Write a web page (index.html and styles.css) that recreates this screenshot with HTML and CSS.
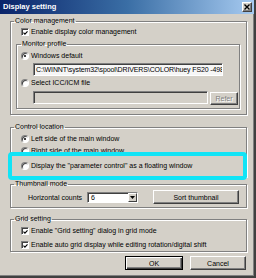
FILE: index.html
```html
<!DOCTYPE html>
<html>
<head>
<meta charset="utf-8">
<link rel="stylesheet" href="styles.css">
</head>
<body>
<div class="win">
  <div class="titlebar">
    <span class="title">Display setting</span>
    <span class="close"><svg width="6" height="6" viewBox="0 0 6 6"><path d="M0.5 0.5L5.5 5.5M5.5 0.5L0.5 5.5" stroke="#000" stroke-width="1.4"/></svg></span>
  </div>
  <div class="body">
    <fieldset class="grp g-color">
      <legend>Color management</legend>
      <div class="opt row-cm"><span class="chk"><svg width="6" height="6" viewBox="0 0 6 6"><path d="M0.6 2.6L2.3 4.4L5.4 1.0" stroke="#000" stroke-width="1.3" fill="none"/></svg></span>Enable display color management</div>
      <fieldset class="grp sub">
        <legend>Monitor profile</legend>
        <div class="opt r-win"><span class="rad on"></span>Windows default</div>
        <div class="field f1">C:\WINNT\system32\spool\DRIVERS\COLOR\huey FS20 -498</div>
        <div class="opt r-icc"><span class="rad"></span>Select ICC/ICM file</div>
        <div class="filerow"><div class="field f2"></div><div class="btn dis">Refer</div></div>
      </fieldset>
    </fieldset>

    <fieldset class="grp g-ctrl">
      <legend>Control location</legend>
      <div class="opt r-left"><span class="rad on"></span>Left side of the main window</div>
      <div class="opt r-right"><span class="rad"></span>Right side of the main window</div>
      <div class="opt r-float"><span class="rad"></span>Display the "parameter control" as a floating window</div>
    </fieldset>

    <fieldset class="grp g-thumb">
      <legend>Thumbnail mode</legend>
      <div class="thumbrow">
        <span class="hlabel">Horizontal counts</span>
        <div class="select"><span class="sval">6</span><span class="sarrow"><svg width="5" height="3" viewBox="0 0 5 3"><path d="M0 0H5L2.5 3Z" fill="#000"/></svg></span></div>
        <div class="btn sort">Sort thumbnail</div>
      </div>
    </fieldset>

    <fieldset class="grp g-grid">
      <legend>Grid setting</legend>
      <div class="opt r-g1"><span class="chk"><svg width="6" height="6" viewBox="0 0 6 6"><path d="M0.6 2.6L2.3 4.4L5.4 1.0" stroke="#000" stroke-width="1.3" fill="none"/></svg></span>Enable "Grid setting" dialog in grid mode</div>
      <div class="opt r-g2"><span class="chk"><svg width="6" height="6" viewBox="0 0 6 6"><path d="M0.6 2.6L2.3 4.4L5.4 1.0" stroke="#000" stroke-width="1.3" fill="none"/></svg></span>Enable auto grid display while editing rotation/digital shift</div>
    </fieldset>

    <div class="actions">
      <div class="btn ok">OK</div>
      <div class="btn cancel">Cancel</div>
    </div>
  </div>
  <div class="highlight"></div>
</div>
</body>
</html>
```

FILE: styles.css
```css
* { box-sizing: border-box; }
html, body { margin: 0; padding: 0; background: #d4d0c8; }
.win {
  position: relative;
  width: 256px;
  height: 278px;
  background: #d4d0c8;
  border-right: 2px solid #404040;
  border-bottom: 2px solid #404040;
  box-shadow: inset -1px -1px 0 #808080;
  font-family: "Liberation Sans", Arial, sans-serif;
  font-size: 7px;
  color: #000;
  overflow: hidden;
}
.titlebar {
  height: 14px;
  width: 254px;
  background: linear-gradient(to right, #0a246a 0%, #3a6ea5 50%, #a6caf0 100%);
  display: flex;
  align-items: center;
  justify-content: space-between;
  padding: 0 2px 0 3px;
}
.title {
  color: #fff;
  font-weight: bold;
  font-size: 7.5px;
  line-height: 14px;
}
.close {
  width: 10px;
  height: 10px;
  background: #d4d0c8;
  border: 1px solid;
  border-color: #fff #404040 #404040 #fff;
  box-shadow: inset -1px -1px 0 #808080;
  display: flex;
  align-items: center;
  justify-content: center;
}
.body { display: flex; flex-direction: column; }

.grp {
  margin: 0 0 0 10px;
  width: 237px;
  min-width: 0;
  padding: 0;
  border: 1px solid #808080;
  box-shadow: inset 1px 1px 0 #fff, 1px 1px 0 #fff;
}
.grp legend {
  margin-left: 3px;
  padding: 0 1px;
  line-height: 10px;
  height: 10px;
}
.sub legend { margin-left: 4px; }

.opt {
  display: flex;
  align-items: center;
  height: 10px;
  line-height: 10px;
  white-space: nowrap;
}
.chk {
  width: 8px;
  height: 8px;
  margin-right: 2px;
  background: #fff;
  border: 1px solid;
  border-color: #808080 #fff #fff #808080;
  box-shadow: inset 1px 1px 0 #404040;
  display: flex;
  align-items: center;
  justify-content: center;
  flex: none;
}
.chk svg { display: block; margin: 1px 0 0 1px; }
.rad {
  width: 8px;
  height: 8px;
  margin-right: 2px;
  border-radius: 50%;
  background: #fff;
  border: 1px solid;
  border-color: #808080 #fff #fff #808080;
  box-shadow: inset 1px 1px 0 #404040;
  flex: none;
  position: relative;
}
.rad.on::after {
  content: "";
  position: absolute;
  left: 2px;
  top: 2px;
  width: 2px;
  height: 2px;
  border-radius: 50%;
  background: #000;
}

/* Color management */
.g-color { margin-top: 2px; padding-bottom: 5px; }
.row-cm { margin: 1px 0 0 10px; }
.sub { margin: 2px 0 0 5px; width: 224px; padding-bottom: 3px; }
.r-win { margin: 2px 0 0 4px; }
.field {
  height: 13px;
  border: 1px solid;
  border-color: #808080 #fff #fff #808080;
  box-shadow: inset 1px 1px 0 #404040;
  white-space: nowrap;
  overflow: hidden;
  line-height: 11px;
  padding-left: 2px;
}
.f1 { margin: 2px 0 0 16px; width: 190px; background: #f6f6f6; letter-spacing: -0.12px; }
.r-icc { margin: 2px 0 0 4px; }
.filerow { display: flex; align-items: flex-start; margin: 3px 0 0 16px; height: 14px; }
.f2 { width: 175px; background: #d4d0c8; }
.btn {
  background: #d4d0c8;
  border: 1px solid;
  border-color: #fff #404040 #404040 #fff;
  box-shadow: inset -1px -1px 0 #808080;
  display: flex;
  align-items: center;
  justify-content: center;
  white-space: nowrap;
}
.btn.dis {
  width: 28px;
  height: 13px;
  margin: 1px 0 0 2px;
  color: #808080;
  text-shadow: 1px 1px 0 #fff;
}

/* Control location */
.g-ctrl { margin-top: 7px; padding-bottom: 5px; }
.r-left { margin: 2px 0 0 10px; }
.r-right { margin: 2px 0 0 10px; }
.r-float { margin: 5px 0 0 10px; }

/* Thumbnail */
.g-thumb { margin-top: 2px; padding-bottom: 3px; }
.thumbrow { display: flex; align-items: flex-end; margin: 1px 0 0 17px; height: 14px; }
.hlabel { align-self: center; width: 59px; }
.select {
  width: 51px;
  height: 11px;
  margin-bottom: 1px;
  background: #fff;
  border: 1px solid;
  border-color: #808080 #fff #fff #808080;
  box-shadow: inset 1px 1px 0 #404040;
  display: flex;
  align-items: stretch;
}
.sval { flex: 1; padding-left: 3px; line-height: 9px; }
.sarrow {
  width: 9px;
  background: #d4d0c8;
  border: 1px solid;
  border-color: #fff #404040 #404040 #fff;
  display: flex;
  align-items: center;
  justify-content: center;
}
.btn.sort { width: 86px; height: 14px; margin-left: 15px; }

/* Grid */
.g-grid { margin-top: 6px; padding-bottom: 1px; }
.r-g1 { margin: 2px 0 0 10px; }
.r-g2 { margin: 4px 0 0 10px; }

.actions { display: flex; justify-content: flex-end; gap: 7px; margin: 4px 8px 0 0; }
.btn.ok {
  width: 58px;
  height: 14px;
  border-color: #000;
  box-shadow: inset 1px 1px 0 #fff, inset -1px -1px 0 #404040, inset -2px -2px 0 #808080;
}
.btn.cancel { width: 56px; height: 14px; }

.highlight {
  position: absolute;
  left: 8px;
  top: 152px;
  width: 239px;
  height: 28px;
  border: 4px solid #10e4f6;
  border-radius: 4px;
}
```
